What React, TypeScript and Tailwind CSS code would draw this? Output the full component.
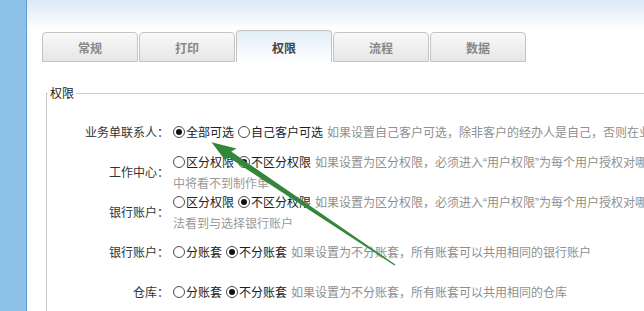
import React from "react";

const FONT = "font-['Noto_Sans_CJK_SC','Noto_Sans',sans-serif]";

function Radio({ checked }: { checked?: boolean }) {
  return (
    <span className="relative inline-flex w-[12px] h-[12px] flex-none items-center justify-center rounded-full border border-[#4a4a4a] bg-white">
      {checked && <span className="block w-[6px] h-[6px] rounded-full bg-[#111]" />}
    </span>
  );
}

function Opt({ checked, label }: { checked?: boolean; label: string }) {
  return (
    <span className="inline-flex items-center mr-[4px]">
      <Radio checked={checked} />
      <span className="ml-[1px] text-[#222]">{label}</span>
    </span>
  );
}

function Desc({ text }: { text: string }) {
  const parts = text.split(/([“”])/);
  return (
    <span className="text-[#8f8f8f]">
      {parts.map((p, i) =>
        p === "“" || p === "”" ? (
          <span key={i} className="font-['Liberation_Sans',sans-serif]">
            {p}
          </span>
        ) : (
          <React.Fragment key={i}>{p}</React.Fragment>
        )
      )}
    </span>
  );
}

type Row = {
  label: string;
  opts: { label: string; checked?: boolean }[];
  desc: string;
  more?: string;
};

const rows: Row[] = [
  {
    label: "业务单联系人：",
    opts: [{ label: "全部可选", checked: true }, { label: "自己客户可选" }],
    desc: "如果设置自己客户可选，除非客户的经办人是自己，否则在业务单中无法选择该联系人",
  },
  {
    label: "工作中心：",
    opts: [{ label: "区分权限" }, { label: "不区分权限", checked: true }],
    desc: "如果设置为区分权限，必须进入“用户权限”为每个用户授权对哪些工作中心可见，否则在工作",
    more: "中将看不到制作单",
  },
  {
    label: "银行账户：",
    opts: [{ label: "区分权限" }, { label: "不区分权限", checked: true }],
    desc: "如果设置为区分权限，必须进入“用户权限”为每个用户授权对哪些银行账户可见，否则无",
    more: "法看到与选择银行账户",
  },
  {
    label: "银行账户：",
    opts: [{ label: "分账套" }, { label: "不分账套", checked: true }],
    desc: "如果设置为不分账套，所有账套可以共用相同的银行账户",
  },
  {
    label: "仓库：",
    opts: [{ label: "分账套" }, { label: "不分账套", checked: true }],
    desc: "如果设置为不分账套，所有账套可以共用相同的仓库",
  },
];

const tabs = ["常规", "打印", "权限", "流程", "数据"];

export default function App() {
  return (
    <div className={`relative w-[644px] h-[311px] overflow-hidden flex bg-white ${FONT}`}>
      <div className="w-[27px] flex-none bg-[#8dc1e7] border-r border-[#5c9fd4]" />
      <div className="flex-1 min-w-0 overflow-hidden bg-[linear-gradient(to_bottom,#dce9f6,#ffffff_30px)] pl-[15px] pt-[30px]">
        <div className="flex items-end gap-[1px] h-[32px]">
          {tabs.map((t, i) =>
            i === 2 ? (
              <div
                key={t}
                className="w-[96px] h-[32px] rounded-t-[4px] border border-b-0 border-[#c4c4c4] bg-[linear-gradient(to_bottom,#e2edf7,#ffffff)] flex items-center justify-center pt-[3px] text-[12px] font-bold text-[#444]"
              >
                {t}
              </div>
            ) : (
              <div
                key={t}
                className="w-[96px] h-[30px] rounded-t-[4px] border border-[#c4c4c4] bg-[linear-gradient(to_bottom,#f9f9f9,#e6e6e6)] flex items-center justify-center pt-[2px] text-[12px] font-bold text-[#888]"
              >
                {t}
              </div>
            )
          )}
        </div>

        <fieldset className="mt-[23px] ml-[4px] w-[700px] h-[400px] border border-[#cccccc] p-0 m-0">
          <legend className="ml-[1px] px-[2px] text-[12px] leading-[16px] text-[#222]">权限</legend>
          <div className="pt-[11px] text-[12px] leading-[20px]">
            {rows.map((r, idx) => (
              <div key={idx} className="flex items-center h-[40px]">
                <div className="w-[122px] flex-none text-right text-[#333] whitespace-nowrap">{r.label}</div>
                <div className="ml-[4px] flex flex-col whitespace-nowrap">
                  <div className="flex items-center">
                    {r.opts.map((o) => (
                      <Opt key={o.label} label={o.label} checked={o.checked} />
                    ))}
                    <Desc text={r.desc} />
                  </div>
                  {r.more && <div className="text-[#999]">{r.more}</div>}
                </div>
              </div>
            ))}
          </div>
        </fieldset>
      </div>

      <svg
        className="absolute left-0 top-0 pointer-events-none"
        width="644"
        height="311"
        viewBox="0 0 644 311"
      >
        <polygon
          points="211.5,142.3 236.5,148.4 231.2,151.6 395.3,264.5 394.6,265.5 227.6,156.8 225.2,160.3"
          fill="#32873a"
        />
      </svg>
    </div>
  );
}
